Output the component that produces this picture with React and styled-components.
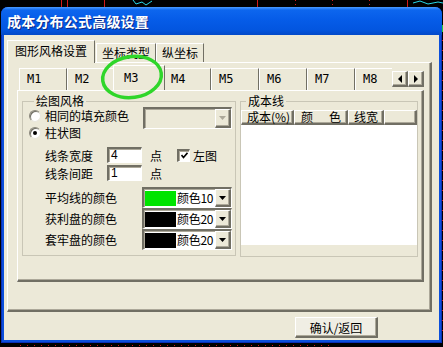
import React from "react";
import styled, { createGlobalStyle, css } from "styled-components";

const GlobalStyle = createGlobalStyle`
  html, body { margin: 0; padding: 0; background: #000; }
  body {
    font-family: "Noto Sans CJK SC", "Liberation Sans", sans-serif;
    font-size: 12px;
    color: #000;
  }
`;

const face = "#ECE9D8";

// raised / sunken 3d edges, classic windows look
const raised = css`
  border-style: solid;
  border-width: 1px 2px 2px 1px;
  border-color: #fff #716f64 #716f64 #fff;
  box-shadow: inset -1px -1px 0 #aca899;
`;
const sunken = css`
  border-style: solid;
  border-width: 2px 1px 1px 2px;
  border-color: #716f64 #fff #fff #716f64;
  box-shadow: inset 1px 1px 0 #aca899;
`;

const Screen = styled.div`
  position: relative;
  width: 443px;
  height: 347px;
  overflow: hidden;
  background: #000;
  padding: 7px 0 0 1px;
  box-sizing: border-box;
`;

const Backdrop = styled.svg`
  position: absolute;
  left: 0;
  top: 0;
`;

const Window = styled.div`
  position: relative;
  width: 441px;
  height: 336px;
  box-sizing: border-box;
  display: flex;
  flex-direction: column;
  background: #0b4fdb;
  border-radius: 7px 7px 0 0;
  padding: 0 3px 3px 3px;
  box-shadow: inset 1px 0 0 #0a2fb5, inset -1px 0 0 #0a2fb5, inset 0 -1px 0 #0a2fb5;
`;

const TitleBar = styled.div`
  height: 28px;
  margin: 0 -3px;
  padding-left: 6px;
  display: flex;
  align-items: center;
  border-radius: 7px 7px 0 0;
  background: linear-gradient(#4a9bff 0, #0d66ee 3px, #065ce8 45%, #0356e0 80%, #0349c8 100%);
  color: #fff;
  font-weight: bold;
  font-size: 14px;
  letter-spacing: 0.2px;
  text-shadow: 1px 1px 0 #0a2a8a;
`;

const Client = styled.div`
  flex: 1;
  background: ${face};
  padding: 6px 7px 0 3px;
  display: flex;
  flex-direction: column;
`;

const OuterTabs = styled.div`
  display: flex;
  align-items: flex-end;
  height: 21px;
  position: relative;
  z-index: 1;
`;

const OuterTab = styled.div`
  height: 18px;
  padding: 0 5px;
  line-height: 17px;
  background: ${face};
  border: 1px solid;
  border-color: #fff #716f64 transparent #fff;
  border-bottom: none;
  white-space: nowrap;
  ${p =>
    p.$active &&
    css`
      height: 22px;
      line-height: 20px;
      padding: 0 7px 0 7px;
      margin: 0 1px -1px 0;
    `}
`;

const OuterPanel = styled.div`
  height: 250px;
  box-sizing: border-box;
  border-style: solid;
  border-width: 1px 2px 2px 1px;
  border-color: #fff #716f64 #716f64 #fff;
  box-shadow: inset -1px -1px 0 #aca899;
  padding: 2px 6px 0 9px;
  display: flex;
  flex-direction: column;
`;

const InnerStrip = styled.div`
  display: flex;
  height: 25px;
  position: relative;
  z-index: 1;
`;

const InnerTabs = styled.div`
  flex: 1;
  display: flex;
  align-items: flex-end;
  overflow: hidden;
  padding-left: 2px;
`;

const InnerTab = styled.div`
  flex: none;
  width: 48px;
  height: 22px;
  box-sizing: border-box;
  padding-left: 7px;
  line-height: 20px;
  font-family: "DejaVu Sans Mono", "Liberation Mono", monospace;
  font-size: 12px;
  background: ${face};
  border: 1px solid;
  border-color: #fff #716f64 transparent #fff;
  border-bottom: none;
  ${p =>
    p.$active &&
    css`
      width: 52px;
      height: 26px;
      margin: 0 -2px -1px;
      padding-left: 10px;
      line-height: 24px;
      position: relative;
    `}
`;

const Arrows = styled.div`
  display: flex;
  margin-top: 6px;
  height: 16px;
`;

const ArrowButton = styled.div`
  width: 16px;
  height: 16px;
  box-sizing: border-box;
  ${raised};
  background: ${face};
  display: flex;
  align-items: center;
  justify-content: center;
`;

const InnerPanel = styled.div`
  height: 192px;
  box-sizing: border-box;
  border-style: solid;
  border-width: 1px 2px 2px 1px;
  border-color: #fff #716f64 #716f64 #fff;
  box-shadow: inset -1px -1px 0 #aca899;
  padding: 3px 4px 0 4px;
  display: flex;
  gap: 4px;
  align-items: flex-start;
`;

const Group = styled.fieldset`
  margin: 0;
  min-width: 0;
  width: ${p => p.$w}px;
  height: ${p => (p.$h ? `${p.$h}px` : "auto")};
  box-sizing: border-box;
  border: 1px solid #c9c6b6;
  padding: ${p => p.$pad};
  display: flex;
  flex-direction: column;
  legend {
    padding: 0 2px;
    margin-left: 5px;
    line-height: 14px;
    font-size: 12px;
  }
`;

const Row = styled.div`
  display: flex;
  align-items: center;
  height: ${p => p.$h || 16}px;
  margin-top: ${p => p.$mt || 0}px;
  padding-left: ${p => p.$indent || 0}px;
`;

const TopRow = styled.div`
  display: flex;
  justify-content: space-between;
  align-items: flex-start;
  margin-top: -1px;
  padding-right: 3px;
  height: 22px;
`;

const Option = styled.label`
  display: flex;
  align-items: center;
  gap: 4px;
  height: 14px;
  margin-top: ${p => p.$mt || 0}px;
  line-height: 14px;
`;

const Radio = styled.span`
  width: 12px;
  height: 12px;
  box-sizing: border-box;
  border-radius: 50%;
  background: #fff;
  border: 1px solid;
  border-color: #8a877a #e8e6dc #e8e6dc #8a877a;
  box-shadow: inset 1px 1px 0 #716f64;
  display: flex;
  align-items: center;
  justify-content: center;
  &::after {
    content: "";
    width: 4px;
    height: 4px;
    border-radius: 50%;
    background: ${p => (p.$on ? "#000" : "transparent")};
  }
`;

const Combo = styled.div`
  width: ${p => p.$w}px;
  height: ${p => p.$h}px;
  box-sizing: border-box;
  ${sunken};
  background: ${p => (p.$disabled ? face : "#fff")};
  display: flex;
  align-items: center;
  padding-left: 1px;
  white-space: nowrap;
  overflow: hidden;
`;

const ComboText = styled.span`
  flex: none;
  font-size: 12px;
  letter-spacing: -0.3px;
  line-height: 14px;
`;

const DropButton = styled.div`
  margin-left: auto;
  flex: none;
  width: 16px;
  height: 100%;
  box-sizing: border-box;
  ${raised};
  background: ${face};
  display: flex;
  align-items: center;
  justify-content: center;
`;

const Swatch = styled.span`
  flex: none;
  width: 31px;
  height: 15px;
  background: ${p => p.$color};
  margin-right: 1px;
`;

const FieldLabel = styled.span`
  width: ${p => p.$w}px;
  flex: none;
`;

const TextBox = styled.div`
  width: 35px;
  height: 16px;
  box-sizing: border-box;
  ${sunken};
  background: #fff;
  padding-left: 2px;
  line-height: 13px;
  font-family: "Liberation Sans", sans-serif;
`;

const Unit = styled.span`
  margin-left: 8px;
`;

const Check = styled.span`
  width: 13px;
  height: 13px;
  box-sizing: border-box;
  ${sunken};
  background: #fff;
  margin-left: 15px;
  margin-right: 3px;
  display: flex;
  align-items: center;
  justify-content: center;
`;

const List = styled.div`
  flex: 1;
  display: flex;
  flex-direction: column;
  margin-top: 2px;
`;

const ListHead = styled.div`
  display: flex;
  height: 15px;
`;

const HeadCell = styled.div`
  width: ${p => (p.$w ? `${p.$w}px` : "auto")};
  flex: ${p => (p.$w ? "none" : 1)};
  box-sizing: border-box;
  ${raised};
  background: ${face};
  line-height: 12px;
  padding: 0 5px 0 ${p => p.$pl || 6}px;
  display: flex;
  justify-content: ${p => (p.$spread ? "space-between" : "flex-start")};
  font-size: 12px;
  white-space: nowrap;
`;

const ListBody = styled.div`
  height: 119px;
  background: #fff;
`;

const ListFoot = styled.div`
  height: 10px;
  background: ${face};
  border-top: 1px solid #fff;
`;

const Footer = styled.div`
  display: flex;
  justify-content: flex-end;
  padding: 5px 54px 0 0;
`;

const Button = styled.button`
  width: 83px;
  height: 21px;
  box-sizing: border-box;
  ${raised};
  background: #f0eee4;
  font-family: inherit;
  font-size: 12px;
  padding: 0;
  color: #000;
`;

const Annotation = styled.svg`
  position: absolute;
  left: 95px;
  top: 50px;
  pointer-events: none;
  z-index: 5;
`;

const Tri = ({ dir, color = "#000" }) => {
  const pts = {
    down: "0,0 7,0 3.5,4",
    left: "4,0 4,8 0,4",
    right: "0,0 0,8 4,4"
  }[dir];
  const w = dir === "down" ? 7 : 4;
  const h = dir === "down" ? 4 : 8;
  return (
    <svg width={w} height={h} viewBox={`0 0 ${w} ${h}`}>
      <polygon points={pts} fill={color} />
    </svg>
  );
};

const colorRows = [
  { label: "平均线的颜色", color: "#00e400", name: "颜色10" },
  { label: "获利盘的颜色", color: "#000", name: "颜色20" },
  { label: "套牢盘的颜色", color: "#000", name: "颜色20" }
];

const tabs = ["M1", "M2", "M3", "M4", "M5", "M6", "M7", "M8"];

export default function App() {
  return (
    <Screen>
      <GlobalStyle />
      <Backdrop width="443" height="347">
        <g stroke="#d21a1a" strokeWidth="1">
          <line x1="61.5" y1="0" x2="61.5" y2="8" />
          <line x1="67.5" y1="0" x2="67.5" y2="8" />
          <line x1="104.5" y1="0" x2="104.5" y2="8" />
          <line x1="257.5" y1="0" x2="257.5" y2="8" />
          <line x1="407.5" y1="0" x2="407.5" y2="8" />
          <line x1="295.5" y1="0" x2="295.5" y2="8" strokeDasharray="1 3" />
          <line x1="332.5" y1="0" x2="332.5" y2="8" strokeDasharray="1 3" />
          <line x1="369.5" y1="0" x2="369.5" y2="8" strokeDasharray="1 3" />
          <line x1="442.5" y1="40" x2="442.5" y2="340" strokeDasharray="1 9" />
          <line x1="20" y1="345.5" x2="330" y2="345.5" strokeDasharray="1 6" />
        </g>
        <polyline points="133,0 136,4 142,2 146,5 152,1" fill="none" stroke="#27d7e8" />
        <polyline points="413,3 420,1 428,4 438,2 443,3" fill="none" stroke="#27d7e8" />
        <line x1="442.5" y1="25" x2="442.5" y2="32" stroke="#23c93a" />
      </Backdrop>
      <Window>
        <TitleBar>成本分布公式高级设置</TitleBar>
        <Client>
          <OuterTabs>
            <OuterTab $active>图形风格设置</OuterTab>
            <OuterTab>坐标类型</OuterTab>
            <OuterTab>纵坐标</OuterTab>
          </OuterTabs>
          <OuterPanel>
            <InnerStrip>
              <InnerTabs>
                {tabs.map(t => (
                  <InnerTab key={t} $active={t === "M3"}>
                    {t}
                  </InnerTab>
                ))}
              </InnerTabs>
              <Arrows>
                <ArrowButton>
                  <Tri dir="left" />
                </ArrowButton>
                <ArrowButton>
                  <Tri dir="right" />
                </ArrowButton>
              </Arrows>
            </InnerStrip>
            <InnerPanel>
              <Group $w={214} $pad="0 0 5px 6px">
                <legend>绘图风格</legend>
                <TopRow>
                  <Option $mt={2}>
                    <Radio />
                    相同的填充颜色
                  </Option>
                  <Combo $w={89} $h={22} $disabled>
                    <DropButton>
                      <Tri dir="down" color="#aca899" />
                    </DropButton>
                  </Combo>
                </TopRow>
                <Row $h={14} $mt={-3}>
                  <Option>
                    <Radio $on />
                    柱状图
                  </Option>
                </Row>
                <Row $mt={7} $indent={16}>
                  <FieldLabel $w={62}>线条宽度</FieldLabel>
                  <TextBox>4</TextBox>
                  <Unit>点</Unit>
                  <Check>
                    <svg width="7" height="7" viewBox="0 0 7 7">
                      <polyline points="0.5,3 2.5,5.5 6.5,0.8" fill="none" stroke="#000" strokeWidth="1.6" />
                    </svg>
                  </Check>
                  左图
                </Row>
                <Row $mt={2} $indent={16}>
                  <FieldLabel $w={62}>线条间距</FieldLabel>
                  <TextBox>1</TextBox>
                  <Unit>点</Unit>
                </Row>
                {colorRows.map((r, i) => (
                  <Row key={r.label} $h={21} $mt={i === 0 ? 6 : 0} $indent={16}>
                    <FieldLabel $w={97}>{r.label}</FieldLabel>
                    <Combo $w={90} $h={21}>
                      <Swatch $color={r.color} />
                      <ComboText>{r.name}</ComboText>
                      <DropButton>
                        <Tri dir="down" />
                      </DropButton>
                    </Combo>
                  </Row>
                ))}
              </Group>
              <Group $w={178} $h={163} $pad="0">
                <legend>成本线</legend>
                <List>
                  <ListHead>
                    <HeadCell $w={53} $pl={5}>成本(%)</HeadCell>
                    <HeadCell $w={54} $spread>
                      <span>颜</span>
                      <span>色</span>
                    </HeadCell>
                    <HeadCell $w={36} $pl={5}>线宽</HeadCell>
                    <HeadCell />
                  </ListHead>
                  <ListBody />
                  <ListFoot />
                </List>
              </Group>
            </InnerPanel>
          </OuterPanel>
          <Footer>
            <Button>确认/返回</Button>
          </Footer>
        </Client>
      </Window>
      <Annotation width="75" height="55" viewBox="0 0 75 55">
        <ellipse
          cx="37"
          cy="27"
          rx="29.5"
          ry="20.5"
          fill="none"
          stroke="#2fd62a"
          strokeWidth="3.5"
          transform="rotate(-8 37 27)"
        />
      </Annotation>
    </Screen>
  );
}
